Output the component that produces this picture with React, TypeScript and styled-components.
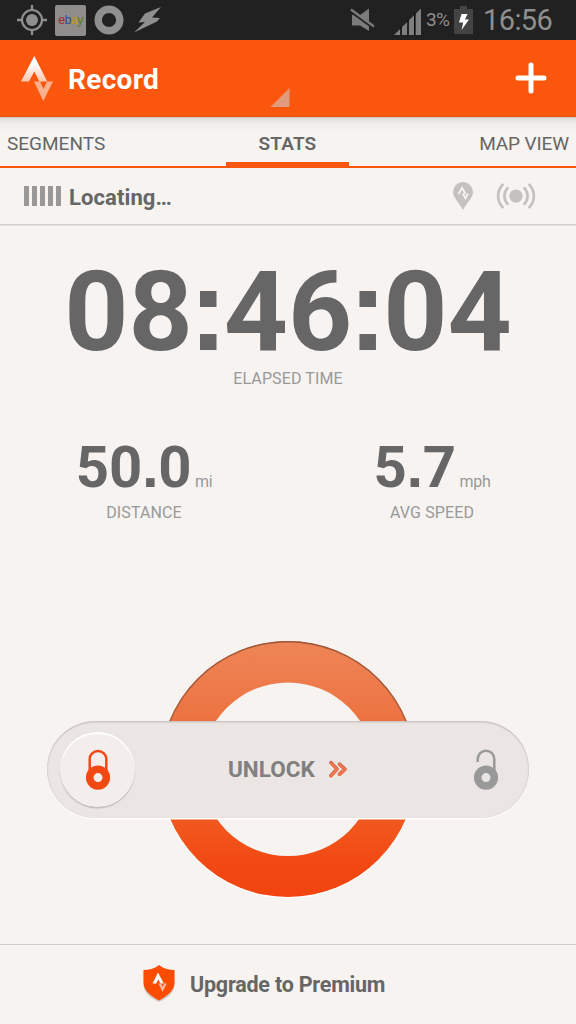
import React from "react";
import styled, { createGlobalStyle } from "styled-components";

const GlobalStyle = createGlobalStyle`
  * { box-sizing: border-box; }
  html, body { margin: 0; padding: 0; background: #f6f3f0; }
  body { font-family: Roboto, "Liberation Sans", sans-serif; color: #666; overflow: hidden; }
  svg { display: block; flex: none; }
`;

const Screen = styled.div`
  width: 576px;
  height: 1024px;
  display: flex;
  flex-direction: column;
  background: #f6f3f0;
  overflow: hidden;
`;

const StatusBar = styled.div`
  height: 40px;
  flex: none;
  display: flex;
  align-items: center;
  justify-content: space-between;
  padding: 0 24px 0 16px;
  background: #212121;
  color: #8f8f8f;
`;

const StatusGroup = styled.div`
  display: flex;
  align-items: center;
  height: 40px;
`;

const EbayTile = styled.div`
  width: 31px;
  height: 31px;
  margin: 0 8px 0 7px;
  border-radius: 2px;
  background: #8f8d8b;
  font: 12.5px/31px "Liberation Sans", sans-serif;
  letter-spacing: -0.6px;
  text-align: center;
`;

const Letter = styled.span<{ $color: string }>`
  color: ${(p) => p.$color};
`;

const Battery = styled.span`
  width: 25px;
  margin-left: 5px;
  font-size: 19px;
  line-height: 42px;
  letter-spacing: -0.6px;
  white-space: nowrap;
`;

const Clock = styled.span`
  width: 70px;
  margin-left: 10px;
  font-size: 29px;
  line-height: 40px;
  letter-spacing: -0.6px;
  white-space: nowrap;
  margin-right: -1px;
`;

const Header = styled.header`
  height: 77px;
  flex: none;
  display: flex;
  align-items: center;
  padding: 0 29px 0 21px;
  background: #fa560d;
  border-bottom: 1px solid #e6530f;
  color: #fff;
`;

const Title = styled.h1`
  margin: 4px 0 0 14px;
  width: 188px;
  font-size: 28px;
  font-weight: 700;
  line-height: 36px;
  letter-spacing: 0.3px;
`;

const SpinnerCorner = styled.div`
  flex: 1;
  align-self: flex-end;
  padding-bottom: 9px;
`;

const Tabs = styled.nav`
  height: 51px;
  flex: none;
  display: grid;
  grid-template-columns: 226px 123px 227px;
  background: linear-gradient(#c9c5c2 0, #e6e2df 2px, #f0ecea 6px, #f6f3f0 16px);
`;

const Tab = styled.div<{ $align: string; $active?: boolean; $spacing?: number }>`
  padding: 0 7px;
  border-bottom: ${(p) => (p.$active ? 6 : 2)}px solid #fa560d;
  font-size: 19px;
  font-weight: ${(p) => (p.$active ? 600 : 400)};
  line-height: 54px;
  height: 51px;
  letter-spacing: ${(p) => p.$spacing ?? 0}px;
  text-align: ${(p) => p.$align};
  white-space: nowrap;
`;

const LocateRow = styled.div`
  height: 58px;
  flex: none;
  display: flex;
  align-items: center;
  padding: 0 40px 1px 24px;
  border-bottom: 1px solid #e3e0dd;
  box-shadow: inset 0 -1px 0 #d3d0cd;
`;

const Bars = styled.div`
  display: flex;
  gap: 3px;
  margin-right: 8px;
`;

const Bar = styled.i`
  width: 5px;
  height: 20px;
  background: #999;
`;

const LocateText = styled.span`
  flex: 1;
  padding-top: 4px;
  font-size: 22px;
  font-weight: 700;
  line-height: 28px;
  letter-spacing: 0.1px;
`;

const Caption = styled.div`
  font-size: 16px;
  line-height: 20px;
  letter-spacing: 0.12px;
  color: #999;
  text-align: center;
  white-space: nowrap;
`;

const Elapsed = styled.section`
  height: 188px;
  flex: none;
  padding-top: 30px;
`;

const Time = styled.div`
  display: flex;
  justify-content: center;
  align-items: baseline;
  height: 113px;
  font-size: 112px;
  font-weight: 700;
  line-height: 108px;
  white-space: nowrap;
`;

const Mark = styled.span<{ $width: number; $size: number }>`
  display: inline-flex;
  justify-content: center;
  width: ${(p) => p.$width}px;
  font-family: "Liberation Sans", sans-serif;
  font-size: ${(p) => p.$size}px;
`;

const Metrics = styled.section`
  display: grid;
  grid-template-columns: 288px 288px;
  flex: none;
  height: 202px;
  padding-top: 18px;
`;

const Reading = styled.div`
  display: flex;
  align-items: baseline;
  justify-content: center;
  gap: 3.500px;
  height: 71px;
  line-height: 69px;
`;

const Value = styled.span`
  font-size: 58px;
  font-weight: 700;
`;

const Unit = styled.span`
  font-size: 16px;
  letter-spacing: -0.3px;
  color: #999;
`;

const Dial = styled.section`
  display: grid;
  justify-items: center;
  align-items: center;
  flex: none;
  height: 328px;
  padding-bottom: 21px;
  & > * { grid-area: 1 / 1; }
`;

const Slider = styled.div`
  z-index: 1;
  display: flex;
  align-items: center;
  width: 482px;
  height: 97px;
  border-radius: 49px;
  padding: 0 30px 0 13px;
  background: #ebe6e3;
  box-shadow: inset 0 1.5px 1px #cbc6c3, inset 1px 0 1px #dcd8d5, inset -1px 0 1px #dcd8d5, 0 1.5px 0 #fdfcfb;
`;

const Knob = styled.div`
  width: 75px;
  height: 75px;
  border-radius: 50%;
  display: grid;
  place-items: center;
  background: #f3eeec;
  box-shadow: inset 0 2px 1px #fff, 0 1.5px 1px #c3bfbc, 0 0 1px #d8d3d0;
`;

const SlideLabel = styled.div`
  flex: 1;
  display: flex;
  align-items: center;
  gap: 13px;
  padding-left: 93px;
  font-size: 22.5px;
  font-weight: 700;
  line-height: 97px;
  color: #808080;
`;

const Footer = styled.footer`
  height: 80px;
  flex: none;
  display: flex;
  align-items: center;
  gap: 15px;
  padding-left: 143px;
  border-top: 1px solid #cfccca;
  font-size: 21.5px;
  font-weight: 700;
  letter-spacing: -0.22px;
  white-space: nowrap;
`;

const GpsIcon = () => (
  <svg width="32" height="32" viewBox="0 0 32 32">
    <circle cx="16" cy="16" r="10" fill="none" stroke="#8f8f8f" strokeWidth="2.2" />
    <circle cx="16" cy="16" r="6" fill="#8f8f8f" />
    <path d="M16 1v5M16 26v5M1 16h5M26 16h5" stroke="#8f8f8f" strokeWidth="2.4" />
  </svg>
);

const RingIcon = () => (
  <svg width="30" height="30" viewBox="0 0 30 30">
    <circle cx="15" cy="15" r="10.8" fill="none" stroke="#8f8f8f" strokeWidth="7.4" />
  </svg>
);

const FlashIcon = () => (
  <svg width="30" height="28" viewBox="0 0 30 28" style={{ marginLeft: 9 }}>
    <path d="M28 1 12 7.500 5.500 16.500l6.500-.5L1 26.500l23-11 3-3.500-8-.5z" fill="#8f8f8f" />
  </svg>
);

const MuteIcon = () => (
  <svg width="26" height="24" viewBox="0 0 26 24" style={{ marginTop: -1 }}>
    <path d="M2 7h8l9-6.500v22.500l-9-5.500H2z" fill="#7b7b7b" />
    <path d="M0 3.200l24 17.500" stroke="#212121" strokeWidth="2.200" />
    <path d="M1 1.500l23 17" stroke="#7b7b7b" strokeWidth="2.200" />
  </svg>
);

const SignalIcon = () => (
  <svg width="27" height="27" viewBox="0 0 27 27" style={{ marginLeft: 18, marginTop: 2 }}>
    <path d="M0 27 27 .5V27z" fill="#7f7f7f" />
    <path d="M7 19v8M14 12v15M20.800 5v22" stroke="#0c0c0c" strokeWidth="1.600" />
  </svg>
);

const BatteryIcon = () => (
  <svg width="19" height="28" viewBox="0 0 19 28" style={{ marginLeft: 3 }}>
    <path d="M6 0h7v3h6v25H0V3h6z" fill="#444" />
    <path d="M7.500 8h6l-2.500 5.500h4L7.500 24l1.700-7.500H5z" fill="#fff" />
  </svg>
);

const StravaIcon = () => (
  <svg width="33" height="46" viewBox="0 0 33 46" style={{ marginTop: 1 }}>
    <defs>
      <linearGradient id="peak" x1="0" y1="0" x2="0" y2="1">
        <stop offset="0.300" stopColor="#fff" />
        <stop offset="1" stopColor="#fdc6ad" />
      </linearGradient>
    </defs>
    <path d="M13.300 0 0 25.500h8l5.300-10 5 10h8z" fill="url(#peak)" />
    <path d="M13 25.500h6l3.500 7.500 3.500-7.500h6L22.300 45z" fill="#fdb08e" />
  </svg>
);

const PlusIcon = () => (
  <svg width="32" height="32" viewBox="0 0 32 32">
    <path d="M16 3v26M3 16h26" stroke="#fff" strokeWidth="5" strokeLinecap="round" />
  </svg>
);

const PinIcon = () => (
  <svg width="20" height="28" viewBox="0 0 20 28" style={{ marginTop: -1 }}>
    <path d="M10 0a10 10 0 0 0-10 10c0 5.500 5.500 9.500 10 18 4.500-8.500 10-12.500 10-18A10 10 0 0 0 10 0z" fill="#c3c2c0" />
    <path d="M5.600 12 9.100 5.800l3.500 6.200M9.800 11.500l2.700 4.800 2.500-4.800" fill="none" stroke="#f6f3f0" strokeWidth="1.800" />
  </svg>
);

const BeaconIcon = () => (
  <svg width="40" height="26" viewBox="-1 0 40 26" style={{ marginLeft: 23 }}>
    <circle cx="19" cy="13" r="6.600" fill="#c3c2c0" />
    <g fill="none" stroke="#c3c2c0" strokeWidth="2.700" strokeLinecap="round">
      <path d="M10.500 5.200a11.500 11.500 0 0 0 0 15.600M5.500 1.800a16.500 16.500 0 0 0 0 22.400" />
      <path d="M27.500 5.200a11.500 11.500 0 0 1 0 15.600M32.500 1.800a16.500 16.500 0 0 1 0 22.400" />
    </g>
  </svg>
);

const Ring = () => (
  <svg width="264" height="265" viewBox="0 0 264 265">
    <defs>
      <linearGradient id="ring" x1="0" y1="0" x2="0" y2="1">
        <stop offset="0" stopColor="#ee8556" />
        <stop offset="0.300" stopColor="#ed7342" />
        <stop offset="0.700" stopColor="#f1581f" />
        <stop offset="0.880" stopColor="#f24812" />
        <stop offset="1" stopColor="#f2430e" />
      </linearGradient>
      <linearGradient id="rim" x1="0" y1="0" x2="0" y2="1">
        <stop offset="0" stopColor="#9c573a" />
        <stop offset="0.400" stopColor="#b5623f" />
        <stop offset="0.500" stopColor="#f2581f" stopOpacity="0" />
      </linearGradient>
    </defs>
    <circle cx="132" cy="133.500" r="128" fill="#fffefd" />
    <circle cx="132" cy="132" r="128" fill="url(#ring)" />
    <circle cx="132" cy="132" r="127.300" fill="none" stroke="url(#rim)" strokeWidth="1.500" />
    <circle cx="132" cy="132.300" r="86.800" fill="#f6f3f0" />
  </svg>
);

const Lock = ({ open }: { open?: boolean }) => {
  const color = open ? "#999" : "#f24812";
  return (
    <svg width="26" height="41" viewBox="0 0 26 41">
      <path
        d={open ? "M4.700 13V10A8.300 8.300 0 0 1 21.300 10V24" : "M4.700 23V10.300A8.300 8.300 0 0 1 21.300 10.300V23"}
        fill="none"
        stroke={color}
        strokeWidth="2.500"
      />
      <circle cx="13" cy="28.600" r="8.300" fill={open ? "#ebe6e3" : "#f3eeec"} stroke={color} strokeWidth="7.600" />
    </svg>
  );
};

const Chevrons = () => (
  <svg width="20" height="20" viewBox="0 0 20 20">
    <g fill="none" strokeWidth="3.400" strokeLinecap="round" strokeLinejoin="round">
      <path d="M3 4.200l6 6.300L3 17M11.500 5.500l5.500 5-5.500 5" stroke="#fff" />
      <path d="M3 2.500 9 9l-6 6.500M11.500 4l5.500 5-5.500 5" stroke="#b9654a" />
      <path d="M3 3.200 9 9.700l-6 6.500M11.500 4.700l5.500 5-5.500 5" stroke="#ee7650" />
    </g>
  </svg>
);

const ShieldIcon = () => (
  <svg width="32" height="38" viewBox="0 0 32 38" style={{ marginTop: -2 }}>
    <path d="M16 2c5 3.500 10 5 15.500 5v12c0 9-7 14-15.500 18C7.500 33 .5 28 .5 19V7C6 7 11 5.500 16 2z" fill="#cdc9c6" />
    <path d="M16 0c5 3.800 10 5 15.500 5v12c0 9-7 13.500-15.500 18.500C7.500 30.500.5 26 .5 17V5C6 5 11 3.800 16 0z" fill="#fc4c02" />
    <path d="M15 7.500 9.500 18.500h3.700l2-4 2.300 4h3.300z" fill="#fff" />
    <path d="M15.500 18.500h2.800l1.300 3 1.500-3h2.700L19.500 27z" fill="#fdb79d" />
  </svg>
);

export default function App() {
  return (
    <Screen>
      <GlobalStyle />
      <StatusBar>
        <StatusGroup>
          <GpsIcon />
          <EbayTile>
            <Letter $color="#a52a32">e</Letter>
            <Letter $color="#244f9b">b</Letter>
            <Letter $color="#c79a0c">a</Letter>
            <Letter $color="#5a8010">y</Letter>
          </EbayTile>
          <RingIcon />
          <FlashIcon />
        </StatusGroup>
        <StatusGroup>
          <MuteIcon />
          <SignalIcon />
          <Battery>3%</Battery>
          <BatteryIcon />
          <Clock>16:56</Clock>
        </StatusGroup>
      </StatusBar>
      <Header>
        <StravaIcon />
        <Title>Record</Title>
        <SpinnerCorner>
          <svg width="34" height="19" viewBox="0 0 34 19">
            <path d="M33.500 0v19h-19z" fill="#e29c7d" />
          </svg>
        </SpinnerCorner>
        <PlusIcon />
      </Header>
      <Tabs>
        <Tab $align="left">SEGMENTS</Tab>
        <Tab $align="center" $active $spacing={0.15}>STATS</Tab>
        <Tab $align="right" $spacing={-0.12}>MAP VIEW</Tab>
      </Tabs>
      <LocateRow>
        <Bars>
          <Bar /><Bar /><Bar /><Bar /><Bar />
        </Bars>
        <LocateText>Locating…</LocateText>
        <PinIcon />
        <BeaconIcon />
      </LocateRow>
      <Elapsed>
        <Time>
          <span>08</span>
          <Mark $width={31} $size={117}>:</Mark>
          <span>46</span>
          <Mark $width={31} $size={117}>:</Mark>
          <span>04</span>
        </Time>
        <Caption>ELAPSED TIME</Caption>
      </Elapsed>
      <Metrics>
        <div>
          <Reading>
            <Value>
              50<Mark $width={16} $size={60}>.</Mark>0
            </Value>
            <Unit>mi</Unit>
          </Reading>
          <Caption>DISTANCE</Caption>
        </div>
        <div>
          <Reading>
            <Value>
              5<Mark $width={16} $size={60}>.</Mark>7
            </Value>
            <Unit>mph</Unit>
          </Reading>
          <Caption>AVG SPEED</Caption>
        </div>
      </Metrics>
      <Dial>
        <Ring />
        <Slider>
          <Knob>
            <Lock />
          </Knob>
          <SlideLabel>
            UNLOCK
            <Chevrons />
          </SlideLabel>
          <Lock open />
        </Slider>
      </Dial>
      <Footer>
        <ShieldIcon />
        Upgrade to Premium
      </Footer>
    </Screen>
  );
}
